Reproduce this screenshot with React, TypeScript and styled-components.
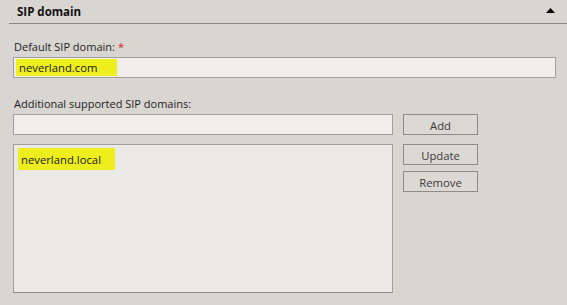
import styled, { createGlobalStyle } from "styled-components";

const GlobalStyle = createGlobalStyle`
  html, body {
    margin: 0;
    padding: 0;
    background: #d9d5d1;
  }
  body {
    font-family: "Open Sans", "Noto Sans", sans-serif;
    font-size: 11px;
    color: #1e1e1e;
  }
`;

const Panel = styled.div`
  width: 567px;
  height: 305px;
  background: #d9d5d1;
`;

const Header = styled.div`
  margin-left: 9px;
  height: 23px;
  border-bottom: 1px solid #8a8785;
  display: flex;
  align-items: center;
  justify-content: space-between;
  padding: 0 12px 0 8px;
`;

const Title = styled.span`
  font-weight: 700;
  font-size: 11.5px;
  color: #111;
  margin-top: -1px;
`;

const Collapse = styled.svg`
  width: 9px;
  height: 5px;
  margin-top: -2px;
`;

const Body = styled.div`
  padding: 15px 11px 0 13px;
`;

const Label = styled.div`
  line-height: 15px;
  padding-left: 1px;
  margin-bottom: 3px;
`;

const Required = styled.span`
  color: #d2232a;
  margin-left: 3px;
`;

const Field = styled.div<{ $width?: number }>`
  box-sizing: border-box;
  height: 21px;
  width: ${(p) => (p.$width ? `${p.$width}px` : "100%")};
  background: #f0eeec;
  border: 1px solid #a19e9b;
  padding: 1px 0 0 2px;
  display: flex;
  align-items: flex-start;
`;

const Marked = styled.span`
  background: #eeee1e;
  padding: 1px 20px 1px 3px;
  line-height: 15px;
  font-size: 11.3px;
  color: #1a1a1a;
`;

const Section = styled.div`
  margin-top: 18px;
`;

const Grid = styled.div`
  display: grid;
  grid-template-columns: 380px 75px;
  column-gap: 10px;
  row-gap: 9px;
`;

const ListBox = styled.div`
  box-sizing: border-box;
  height: 149px;
  background: #ebe9e6;
  border: 1px solid #a19e9b;
  border-bottom-color: #8f8b88;
  padding: 3px 0 0 4px;
`;

const ListItem = styled.div`
  display: inline-block;
  background: #eeee1e;
  padding: 4px 14px 3px 3px;
  line-height: 15px;
  font-size: 11.3px;
  color: #1a1a1a;
`;

const ButtonStack = styled.div`
  display: flex;
  flex-direction: column;
  gap: 6px;
`;

const Button = styled.button`
  box-sizing: border-box;
  width: 75px;
  height: 21px;
  margin: 0;
  padding: 1px 0 0;
  background: #dcd8d4;
  border: 1px solid #8e8b88;
  border-radius: 0;
  font-family: "Open Sans", "Noto Sans", sans-serif;
  font-size: 11.3px;
  color: #3a3a3a;
  line-height: 17px;
`;

export default function App() {
  return (
    <>
      <GlobalStyle />
      <Panel>
        <Header>
          <Title>SIP domain</Title>
          <Collapse viewBox="0 0 9 5">
            <polygon points="0,5 4.5,0 9,5" fill="#000" />
          </Collapse>
        </Header>
        <Body>
          <Label>
            Default SIP domain:<Required>*</Required>
          </Label>
          <Field>
            <Marked>neverland.com</Marked>
          </Field>
          <Section>
            <Label>Additional supported SIP domains:</Label>
            <Grid>
              <Field />
              <Button>Add</Button>
              <ListBox>
                <ListItem>neverland.local</ListItem>
              </ListBox>
              <ButtonStack>
                <Button>Update</Button>
                <Button>Remove</Button>
              </ButtonStack>
            </Grid>
          </Section>
        </Body>
      </Panel>
    </>
  );
}
